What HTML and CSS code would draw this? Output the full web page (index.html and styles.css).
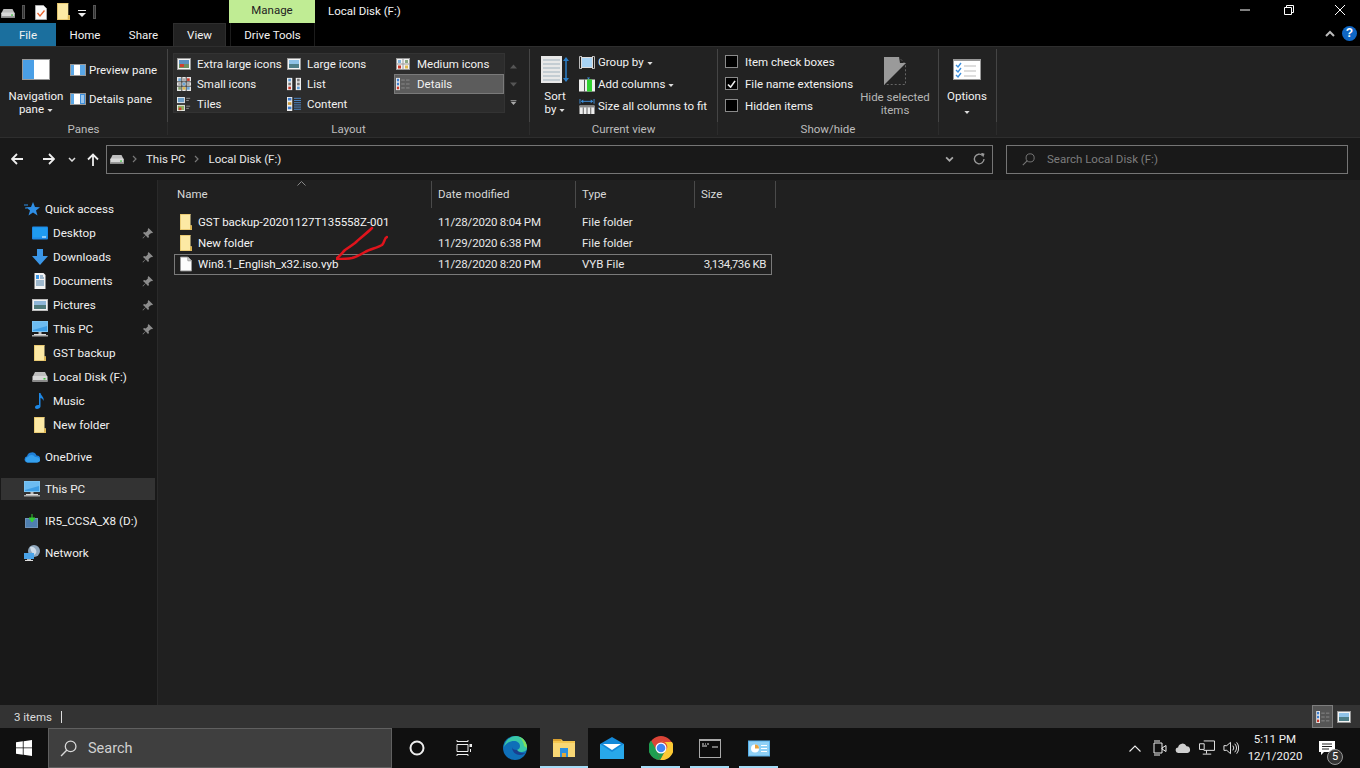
FILE: index.html
```html
<!DOCTYPE html>
<html lang="en">
<head>
<meta charset="utf-8">
<title>Local Disk (F:)</title>
<link rel="stylesheet" href="styles.css">
</head>
<body>
<svg class="defs" width="0" height="0">
  <defs>
    <symbol id="folder" viewBox="1 1 12 16"><path d="M1 1h10.500v11.500H13V17H1z" fill="#fce9a4"/><path d="M11 12.500h2V17h-2z" fill="#dcb553"/><path d="M1 1h10.500v.7H1.700V17H1z" fill="#e3c063"/><path d="M1 16.300h12v.7H1z" fill="#e3c063"/></symbol>
    <symbol id="drive" viewBox="0 0 15 10"><path d="M2.500 0h10L15 5H0z" fill="#bdbdbd"/><rect x="0" y="4" width="15" height="6" rx="1" fill="#d8d8d8"/><rect x="0" y="8" width="15" height="2" fill="#8a8a8a"/><rect x="11" y="6" width="2" height="1.500" fill="#3fc63f"/></symbol>
    <symbol id="pc" viewBox="0 0 16 16"><rect width="16" height="11" fill="#7cc4f2"/><rect x="1" y="1" width="14" height="9" fill="#3d9ee6"/><path d="M1 1h14v4L1 9z" fill="#6cbcf2"/><rect x="6.500" y="11" width="3" height="2" fill="#bbb"/><rect x="2" y="13" width="12" height="1" fill="#ddd"/><rect y="14" width="16" height="1.500" fill="#aaa"/></symbol>
    <symbol id="pin" viewBox="0 0 11 11"><path d="M6.500 0l4.500 4.500-1 .8-.8-.3L6.500 7.200 7 9 6 10 3.700 7.500 1 10.500l-.5-.5 3-2.700L1 5l1-1 1.800.5L6 2.300l-.3-.8z" fill="#8c8c8c"/></symbol>
    <symbol id="file" viewBox="0 0 13 16"><path d="M.5.500h8l4 4v11H.500z" fill="#fcfcfc" stroke="#9a9a9a"/><path d="M8.500.500v4h4z" fill="#d8d8d8" stroke="#9a9a9a"/></symbol>
    <symbol id="caret" viewBox="0 0 7 4"><path d="M0 0h7L3.500 4z" fill="#ddd"/></symbol>
    <symbol id="chev" viewBox="0 0 8 5"><path d="M1 1l3 3 3-3" fill="none" stroke="#aaa" stroke-width="1.500"/></symbol>
    <symbol id="sep" viewBox="0 0 5 8"><path d="M1 1l3 3-3 3" fill="none" stroke="#777" stroke-width="1.200"/></symbol>
    <symbol id="lens" viewBox="0 0 16 16"><circle cx="10" cy="6" r="5" fill="none" stroke="currentColor" stroke-width="1.200"/><path d="M6.500 9.500L1 15" stroke="currentColor" stroke-width="1.300"/></symbol>
    <symbol id="ic-thumb" viewBox="0 0 14 12"><rect x=".5" y=".5" width="13" height="11" fill="#f4f4f4" stroke="#999"/><rect x="2" y="2" width="10" height="8" fill="#5d8fc0"/><rect x="2" y="6" width="10" height="4" fill="#6d8f62"/><rect x="3" y="6" width="4" height="3" fill="#d0402f"/></symbol>
    <symbol id="ic-large" viewBox="0 0 14 12"><rect x=".5" y=".5" width="13" height="11" fill="#f4f4f4" stroke="#999"/><rect x="2" y="2" width="10" height="8" fill="#8fc3e8"/><rect x="2" y="6" width="10" height="4" fill="#4f7f88"/></symbol>
    <symbol id="ic-med" viewBox="0 0 14 12"><rect x=".5" y=".5" width="13" height="11" fill="#f4f4f4" stroke="#999"/><path d="M7 0v12M0 6h14" stroke="#999"/><rect x="2" y="2" width="3" height="3" fill="#7fb4de"/><rect x="9" y="2" width="3" height="3" fill="#8aa884"/><rect x="2" y="7.500" width="3" height="3" fill="#c9392b"/><rect x="9" y="7.500" width="3" height="3" fill="#e0b84c"/></symbol>
    <symbol id="ic-small" viewBox="0 0 16 16"><rect width="16" height="16" fill="#e6e6e6"/><path d="M5.500 0v16M10.500 0v16M0 5.500h16M0 10.500h16" stroke="#2b2b2b"/><rect x="1.500" y="1.500" width="3" height="3" fill="#6aa6d8"/><rect x="6.500" y="1.500" width="3" height="3" fill="#aaa"/><rect x="11.500" y="1.500" width="3" height="3" fill="#c9392b"/><rect x="1.500" y="6.500" width="3" height="3" fill="#aaa"/><rect x="6.500" y="6.500" width="3" height="3" fill="#6aa6d8"/><rect x="11.500" y="6.500" width="3" height="3" fill="#aaa"/><rect x="1.500" y="11.500" width="3" height="3" fill="#7f9f6a"/><rect x="6.500" y="11.500" width="3" height="3" fill="#e0b84c"/><rect x="11.500" y="11.500" width="3" height="3" fill="#6aa6d8"/></symbol>
    <symbol id="ic-list" viewBox="0 0 16 14"><rect width="6" height="14" fill="#eee"/><rect x="10" width="6" height="14" fill="#eee"/><rect x="1.500" y="1" width="3" height="3" fill="#5a9ad6"/><rect x="1.500" y="5.500" width="3" height="3" fill="#777"/><rect x="1.500" y="10" width="3" height="3" fill="#c9392b"/><rect x="11.500" y="1" width="3" height="3" fill="#777"/><rect x="11.500" y="5.500" width="3" height="3" fill="#777"/><rect x="11.500" y="10" width="3" height="3" fill="#5a9ad6"/></symbol>
    <symbol id="ic-details" viewBox="0 0 16 14"><rect width="4.500" height="14" fill="#eee"/><rect x="1" y="1" width="2.500" height="3" fill="#3f7fd0"/><rect x="1" y="5.500" width="2.500" height="3" fill="#3f7fd0"/><rect x="1" y="10" width="2.500" height="3" fill="#c9392b"/><path d="M6 2.500h4M11.500 2.500h4M6 7h4M11.500 7h4M6 11.500h4M11.500 11.500h4" stroke="#8f8f8f"/></symbol>
    <symbol id="ic-tiles" viewBox="0 0 16 16"><rect width="9" height="7" fill="#eee"/><rect x="1" y="1" width="7" height="5" fill="#6a9dc8"/><rect y="9" width="9" height="7" fill="#eee"/><rect x="1" y="10" width="7" height="5" fill="#8fae62"/><rect x="2" y="12" width="3" height="3" fill="#c9392b"/><path d="M10.500 1.500H15M10.500 4h3M10.500 10.500H15M10.500 13h3" stroke="#999"/></symbol>
    <symbol id="ic-content" viewBox="0 0 16 16"><rect width="6" height="16" fill="#eee"/><rect x="1" y="1" width="4" height="3" fill="#3f7fd0"/><rect x="1" y="6" width="4" height="3" fill="#cc9b3e"/><rect x="1" y="11" width="4" height="3" fill="#3f7fd0"/><path d="M8 1.500h8M8 4h8M8 6.500h8M8 9h8M8 11.500h8M8 14h8" stroke="#4f8fd6"/></symbol>
  </defs>
</svg>

<div class="title-row">
  <div class="qat">
    <svg class="q-drive"><use href="#drive"/></svg>
    <i class="q-bar"></i>
    <svg class="q-doc" viewBox="0 0 12 15"><path d="M.5.500h8l3 3v11H.500z" fill="#fafafa" stroke="#aaa"/><path d="M2.500 8l2.500 3 4.500-5.500" fill="none" stroke="#e8622c" stroke-width="1.300"/></svg>
    <svg class="q-folder"><use href="#folder"/></svg>
    <svg class="q-down" viewBox="0 0 8 7"><path d="M0 .5h8" stroke="#eee"/><path d="M0 3h8L4 7z" fill="#eee"/></svg>
    <i class="q-bar q-bar2"></i>
  </div>
  <div class="manage">Manage</div>
  <div class="title">Local Disk (F:)</div>
  <div class="win">
    <svg class="w-btn" viewBox="0 0 10 10"><path d="M0 5h10" stroke="#fff"/></svg>
    <svg class="w-btn w-restore" viewBox="0 0 10 10"><path d="M.5 2.500h7v7h-7zM2.500 2.500v-2h7v7h-2" fill="none" stroke="#fff"/></svg>
    <svg class="w-btn w-close" viewBox="0 0 10 10"><path d="M0 0l10 10M10 0L0 10" stroke="#fff"/></svg>
  </div>
</div>

<div class="tab-row">
  <div class="tab tab-file">File</div>
  <div class="tab tab-home">Home</div>
  <div class="tab tab-share">Share</div>
  <div class="tab tab-view">View</div>
  <div class="tab tab-drive">Drive Tools</div>
  <div class="tab-right">
    <svg class="collapse" viewBox="0 0 10 7"><path d="M1 6l4-4 4 4" fill="none" stroke="#bbb" stroke-width="2"/></svg>
    <div class="help">?</div>
  </div>
</div>

<div class="ribbon">
  <section class="group g-panes">
    <div class="g-body">
      <div class="big">
        <svg class="big-ic nav-ic" viewBox="0 0 28 21"><rect width="28" height="21" fill="#999"/><rect x="1" y="1" width="26" height="19" fill="#fff"/><rect x="1" y="1" width="11" height="19" fill="#4a9fe6"/></svg>
        <span>Navigation</span>
        <span>pane <svg class="caret"><use href="#caret"/></svg></span>
      </div>
      <div class="pane-col">
        <div class="pane-item"><svg class="pane-ic" viewBox="0 0 16 12"><rect width="16" height="12" fill="#999"/><rect x="1" y="1" width="14" height="10" fill="#fff"/><rect x="1" y="1" width="3" height="10" fill="#5aa7e6"/><rect x="10" y="1" width="5" height="10" fill="#5aa7e6"/></svg>Preview pane</div>
        <div class="pane-item"><svg class="pane-ic" viewBox="0 0 16 12"><rect width="16" height="12" fill="#999"/><rect x="1" y="1" width="14" height="10" fill="#fff"/><rect x="1" y="1" width="3" height="10" fill="#5aa7e6"/><path d="M10 1h5v10h-5z" fill="#3d8fdc"/><path d="M11 3h3M11 5h3M11 7h3M11 9h3" stroke="#fff"/></svg>Details pane</div>
      </div>
    </div>
    <div class="g-label">Panes</div>
  </section>

  <section class="group g-layout">
    <div class="g-body">
      <div class="gallery">
        <div class="g-item"><svg class="g-ic"><use href="#ic-thumb"/></svg>Extra large icons</div>
        <div class="g-item"><svg class="g-ic"><use href="#ic-large"/></svg>Large icons</div>
        <div class="g-item g-3"><svg class="g-ic"><use href="#ic-med"/></svg>Medium icons</div>
        <div class="g-item"><svg class="g-ic"><use href="#ic-small"/></svg>Small icons</div>
        <div class="g-item"><svg class="g-ic"><use href="#ic-list"/></svg>List</div>
        <div class="g-item g-3 g-sel"><svg class="g-ic"><use href="#ic-details"/></svg>Details</div>
        <div class="g-item"><svg class="g-ic"><use href="#ic-tiles"/></svg>Tiles</div>
        <div class="g-item"><svg class="g-ic"><use href="#ic-content"/></svg>Content</div>
      </div>
      <div class="g-scroll">
        <svg viewBox="0 0 7 4"><path d="M3.500 0L7 4H0z" fill="#555"/></svg>
        <svg viewBox="0 0 7 4"><path d="M0 0h7L3.500 4z" fill="#555"/></svg>
        <svg viewBox="0 0 7 6"><path d="M0 .5h7" stroke="#aaa"/><path d="M0 2h7L3.500 6z" fill="#aaa"/></svg>
      </div>
    </div>
    <div class="g-label">Layout</div>
  </section>

  <section class="group g-view">
    <div class="g-body">
      <div class="big big-sort">
        <svg class="big-ic sort-ic" viewBox="0 0 28 27"><rect width="21" height="27" fill="#e8e8e8"/><path d="M2 4h17M2 8h17M2 12h17M2 16h17M2 20h17M2 24h17" stroke="#b8c4cc" stroke-width="1.500"/><path d="M25 2v23" stroke="#2d7fc8" stroke-width="1.500"/><path d="M22 5l3-4 3 4zM22 22l3 4 3-4z" fill="#2d7fc8"/></svg>
        <span>Sort</span>
        <span>by <svg class="caret"><use href="#caret"/></svg></span>
      </div>
      <div class="view-col">
        <div class="v-item"><svg class="v-ic" viewBox="0 0 16 13"><path d="M3 .5H.5v12H3M13 .5h2.500v12H13" fill="none" stroke="#bbb"/><rect x="2.500" y="1.500" width="11" height="10" fill="#a8d4f5" stroke="#ddd"/></svg>Group by <svg class="caret"><use href="#caret"/></svg></div>
        <div class="v-item"><svg class="v-ic" viewBox="0 0 16 14"><rect y="2" width="16" height="12" fill="#eee"/><rect x="5" y="2" width="1" height="12" fill="#555"/><rect x="8" y="2" width="5" height="12" fill="#30d030"/><path d="M8 0h3L9.500 2z" fill="#3d8fdc"/></svg>Add columns <svg class="caret"><use href="#caret"/></svg></div>
        <div class="v-item"><svg class="v-ic" viewBox="0 0 16 16"><path d="M.5 0v5M15.500 0v5M2 2.500h12" stroke="#3d8fdc"/><path d="M4 .5v4L1.500 2.500zM12 .5v4l2.500-2z" fill="#3d8fdc"/><rect y="7" width="16" height="9" fill="#eee"/><rect y="7" width="16" height="2" fill="#888"/><path d="M4 9v7M8 9v7M12 9v7" stroke="#555"/></svg>Size all columns to fit</div>
      </div>
    </div>
    <div class="g-label">Current view</div>
  </section>

  <section class="group g-show">
    <div class="g-body">
      <div class="check-col">
        <label class="c-item"><i class="box"></i>Item check boxes</label>
        <label class="c-item"><i class="box"><svg viewBox="0 0 10 9"><path d="M1 5l3 3 5-7" fill="none" stroke="#eee" stroke-width="1.800"/></svg></i>File name extensions</label>
        <label class="c-item"><i class="box"></i>Hidden items</label>
      </div>
      <div class="big big-hide">
        <svg class="big-ic hide-ic" viewBox="0 0 22 28"><path d="M.5 27.500V.500H15l6.500 6.500v20.500z" fill="none" stroke="#666" stroke-dasharray="2 2"/><path d="M0 28V0h15l1 6h6z" fill="#9a9a9a"/></svg>
        <span>Hide selected</span>
        <span>items</span>
      </div>
    </div>
    <div class="g-label">Show/hide</div>
  </section>

  <section class="group g-opt">
    <div class="g-body">
      <div class="big big-opt">
        <svg class="big-ic nav-ic" viewBox="0 0 28 21"><rect width="28" height="21" fill="#999"/><rect x="1" y="2" width="26" height="18" fill="#fff"/><path d="M3 6l2 2 3-4M3 11l2 2 3-4M3 16l2 2 3-4" fill="none" stroke="#3d8fdc" stroke-width="1.400"/><path d="M11 7h12M11 12h12M11 17h12" stroke="#bbb"/></svg>
        <span>Options</span>
        <svg class="caret caret-solo"><use href="#caret"/></svg>
      </div>
    </div>
    <div class="g-label">&nbsp;</div>
  </section>
</div>

<div class="addr-row">
  <svg class="nav-arrow" viewBox="0 0 12 12"><path d="M12 6H1.500M6 1L1 6l5 5" fill="none" stroke="#eee" stroke-width="1.800"/></svg>
  <svg class="nav-arrow fwd" viewBox="0 0 12 12"><path d="M0 6h10.500M6 1l5 5-5 5" fill="none" stroke="#eee" stroke-width="1.800"/></svg>
  <svg class="nav-chev" viewBox="0 0 8 5"><path d="M1 1l3 3 3-3" fill="none" stroke="#ddd" stroke-width="1.500"/></svg>
  <svg class="nav-arrow up" viewBox="0 0 12 13"><path d="M6 13V2M1 6.500l5-5 5 5" fill="none" stroke="#eee" stroke-width="1.800"/></svg>
  <div class="addr">
    <svg class="a-drive"><use href="#drive"/></svg>
    <svg class="a-sep"><use href="#sep"/></svg>
    <span class="a-text">This PC</span>
    <svg class="a-sep a-sep2"><use href="#sep"/></svg>
    <span class="a-text">Local Disk (F:)</span>
    <div class="a-tools">
      <svg class="a-chev"><use href="#chev"/></svg>
      <svg class="a-refresh" viewBox="0 0 12 12"><path d="M9.500 2.500A4.800 4.800 0 1 0 11 6" fill="none" stroke="#999" stroke-width="1.300"/><path d="M7 0h4v4z" fill="#999" transform="rotate(20 9 2)"/></svg>
    </div>
  </div>
  <div class="search-box">
    <svg class="s-lens"><use href="#lens"/></svg>
    <span>Search Local Disk (F:)</span>
  </div>
</div>

<div class="main">
  <nav class="side">
    <div class="s-row top"><svg class="s-ic" viewBox="0 0 16 16"><path d="M9 1l2 5 5 .3-4 3.200 1.500 5L9 11.500 4.500 14.500 6 9.500 2 6.300l5-.3z" fill="#2f8fe6"/><path d="M0 4h4M1 7h2" stroke="#2f8fe6"/></svg>Quick access</div>
    <div class="s-row sub"><svg class="s-ic" viewBox="0 0 16 13"><rect width="16" height="13" rx="1" fill="#1e88e5"/><path d="M1 1h14v10H1z" fill="#1f9bf0"/><path d="M10 10h4v1h-4z" fill="#fff"/></svg>Desktop<svg class="pin"><use href="#pin"/></svg></div>
    <div class="s-row sub"><svg class="s-ic" viewBox="0 0 16 16"><path d="M5 0h6v7h5l-8 9-8-9h5z" fill="#3b97e8"/></svg>Downloads<svg class="pin"><use href="#pin"/></svg></div>
    <div class="s-row sub"><svg class="s-ic" viewBox="0 0 16 16"><path d="M2.500 0h9l2 2v14h-11z" fill="#f2f2f2"/><path d="M4 8h8M4 10h8M4 12h8M8 5h4M8 3h3" stroke="#4a7ea8"/><rect x="4" y="2" width="3" height="4" fill="#3b97e8"/></svg>Documents<svg class="pin"><use href="#pin"/></svg></div>
    <div class="s-row sub"><svg class="s-ic" viewBox="0 0 16 12"><rect width="16" height="12" fill="#bbb"/><rect x="1" y="1" width="14" height="10" fill="#f2f2f2"/><rect x="2" y="2" width="12" height="8" fill="#8fb6d8"/><rect x="2" y="6" width="12" height="4" fill="#4f7a7a"/></svg>Pictures<svg class="pin"><use href="#pin"/></svg></div>
    <div class="s-row sub"><svg class="s-ic"><use href="#pc"/></svg>This PC<svg class="pin"><use href="#pin"/></svg></div>
    <div class="s-row sub"><svg class="s-ic"><use href="#folder"/></svg>GST backup</div>
    <div class="s-row sub"><svg class="s-ic s-drive"><use href="#drive"/></svg>Local Disk (F:)</div>
    <div class="s-row sub"><svg class="s-ic" viewBox="0 0 16 16"><path d="M7 0h1.500c.5 3 4 4 3 8-.5-2-2-3-3-3v8.500C8.500 15 6.500 16 5 16s-2-1-2-2 1.500-2.500 4-2z" fill="#1e88e5"/></svg>Music</div>
    <div class="s-row sub last"><svg class="s-ic"><use href="#folder"/></svg>New folder</div>
    <div class="s-row top gap"><svg class="s-ic" viewBox="0 0 16 11"><path d="M3.500 11a3.200 3.200 0 0 1-.5-6.300A5 5 0 0 1 12.500 4 3.500 3.500 0 0 1 13 11z" fill="#1f80d8"/><path d="M3.500 11A2.800 2.800 0 0 1 4 5.500a4 4 0 0 1 7 0c3-.5 5 1.500 5 3 0 1.500-1.500 2.500-3 2.500z" fill="#35a0ee"/></svg>OneDrive</div>
    <div class="s-row top sel"><svg class="s-ic"><use href="#pc"/></svg>This PC</div>
    <div class="s-row top gap2"><svg class="s-ic" viewBox="0 0 16 14"><rect x="1" y="4" width="13" height="10" fill="#6f92b8"/><rect x="2" y="5" width="11" height="8" fill="#4f7fb0"/><path d="M8 0v6M5 4l3 4 3-4z" fill="#35d035" stroke="#35d035"/></svg>IR5_CCSA_X8 (D:)</div>
    <div class="s-row top gap2"><svg class="s-ic" viewBox="0 0 16 16"><circle cx="10" cy="6" r="6" fill="#8fa7bd"/><path d="M6 2c3-1 5 1 6 3s0 4-2 5L7 6z" fill="#cfdce8"/><rect y="8" width="10" height="6" fill="#4aa3e8"/><rect x="3" y="14" width="4" height="1" fill="#bbb"/><rect x="1" y="15" width="8" height="1" fill="#ddd"/></svg>Network</div>
  </nav>

  <section class="files">
    <div class="sort-mark"><svg viewBox="0 0 9 5"><path d="M.5 4.500l4-4 4 4" fill="none" stroke="#888"/></svg></div>
    <div class="grid head">
      <div>Name</div><div>Date modified</div><div>Type</div><div>Size</div>
    </div>
    <div class="list">
      <div class="grid row"><div class="f-name"><svg class="f-ic"><use href="#folder"/></svg>GST backup-20201127T135558Z-001</div><div class="f-date">11/28/2020 8:04 PM</div><div>File folder</div><div></div></div>
      <div class="grid row"><div class="f-name"><svg class="f-ic"><use href="#folder"/></svg>New folder</div><div class="f-date">11/29/2020 6:38 PM</div><div>File folder</div><div></div></div>
      <div class="grid row selected"><div class="f-name"><svg class="f-ic"><use href="#file"/></svg>Win8.1_English_x32.iso.vyb</div><div class="f-date">11/28/2020 8:20 PM</div><div>VYB File</div><div class="f-size">3,134,736 KB</div></div>
    </div>
    <svg class="scribble" viewBox="0 0 52 36"><path d="M36 4C30 10 24 14 19 19 15 22 12 24 9 26 6 29 4 32 1 34" fill="none" stroke="#e0141c" stroke-width="2.500" stroke-linecap="round" stroke-linejoin="round"/><path d="M51 13C48 14 49 18 46 21 41 24 34 25 29 28 24 31 20 33 16 34 11 35 6 35 1 35" fill="none" stroke="#e0141c" stroke-width="2.500" stroke-linecap="round" stroke-linejoin="round"/></svg>
  </section>
</div>

<div class="status">
  <span class="s-count">3 items</span>
  <i class="s-bar"></i>
  <div class="s-views">
    <div class="s-view on"><svg viewBox="0 0 16 14"><use href="#ic-details"/></svg></div>
    <div class="s-view s-view2"><svg viewBox="0 0 14 12"><use href="#ic-large"/></svg></div>
  </div>
</div>

<footer class="taskbar">
  <div class="start"><svg viewBox="0 0 16 16"><path d="M0 2.300L6.800 1.300v6.200H0zM7.600 1.200L16 0v7.500H7.600zM0 8.300h6.800v6.400L0 13.700zM7.600 8.300H16V16l-8.400-1.200z" fill="#fff"/></svg></div>
  <div class="t-search"><svg class="t-lens"><use href="#lens"/></svg><span>Search</span></div>
  <div class="t-app"><svg class="t-cortana" viewBox="0 0 16 16"><circle cx="8" cy="8" r="6.500" fill="none" stroke="#eee" stroke-width="2"/></svg></div>
  <div class="t-app"><svg class="t-ic" viewBox="0 0 18 16"><path d="M3 4.500h11v7H3zM3 1.500h11M3 14.500h11M3 0v1.500M14 0v1.500M3 14.500V16M14 14.500V16" fill="none" stroke="#eee"/><rect x="15.500" y="4" width="2.500" height="3" fill="#eee"/><rect x="16" y="9" width="1" height="3" fill="#eee"/></svg></div>
  <div class="t-app"><svg class="t-big" viewBox="0 0 24 24"><circle cx="12" cy="12" r="12" fill="#0f6fb8"/><path d="M1 11C2 4 8 0 13 0c6 0 11 5 11 12 0 3-3 4-6 4-2 0-4-1-4-2 2-1 3-2 3-4 0-3-3-5-6-5-4 0-8 2-10 6z" fill="#38c8a8"/><path d="M24 12c0-6-4-10-8-11 3 2 5 6 5 9l3 2z" fill="#7fe05a"/><path d="M14 14c-3 0-5-1-5-3 0 5 4 8 8 8 2 0 4-1 5-2-2 .5-6 0-8-3z" fill="#1a3f8f"/></svg></div>
  <div class="t-app t-active"><svg class="t-big t-exp" viewBox="0 0 22 18"><path d="M0 0h8l2 2h12v16H0z" fill="#f3c64f"/><rect y="0" width="8" height="2" fill="#d9a030"/><rect y="4" width="22" height="14" fill="#f8d775"/><path d="M7 9h8v9h-2v-4H9v4H7z" fill="#2b8fe0"/><rect x="9" y="14" width="4" height="4" fill="#e0a93c"/></svg></div>
  <div class="t-app t-plain"><svg class="t-big t-mail" viewBox="0 0 24 22"><path d="M0 7L12 0l12 7v15H0z" fill="#1489d8"/><path d="M0 7l12 8 12-8v15H0z" fill="#28a8ea"/><path d="M3 7h18l-9 6z" fill="#fff"/></svg></div>
  <div class="t-app t-run"><svg class="t-big" viewBox="0 0 24 24"><circle cx="12" cy="12" r="12" fill="#db4437"/><path d="M12 6h11a12 12 0 0 1-12 18l5-9a5 5 0 0 0-4-9z" fill="#fcc934"/><path d="M2 4.500l6 10.500 3 9A12 12 0 0 1 2 4.500z" fill="#1e9e50"/><path d="M8 15l3 9 5-9z" fill="#1e9e50"/><circle cx="12" cy="12" r="5.500" fill="#fff"/><circle cx="12" cy="12" r="4.300" fill="#4285f4"/></svg></div>
  <div class="t-app t-run"><svg class="t-big t-cmd" viewBox="0 0 22 19"><rect width="22" height="19" fill="#aaa"/><rect x="1" y="2" width="20" height="16" fill="#0c0c0c"/><path d="M3 5h2M6 5h1M8 5h2M3 7h5M13 8h6" stroke="#ddd"/></svg></div>
  <div class="t-app t-run"><svg class="t-big t-cmd" viewBox="0 0 22 16"><rect width="22" height="16" fill="#56b0ea"/><rect x="1" y="1" width="20" height="14" fill="#8fd0f5"/><circle cx="7" cy="8" r="4" fill="#fff"/><path d="M7 8V4a4 4 0 0 1 4 4z" fill="#e8a33c"/><path d="M13 5h6M13 8h6M13 11h6" stroke="#fff"/></svg></div>
  <div class="tray">
    <svg class="tr-chev" viewBox="0 0 12 7"><path d="M.5 6.500L6 1l5.500 5.500" fill="none" stroke="#eee" stroke-width="1.100"/></svg>
    <svg class="tr-ic" viewBox="0 0 16 16"><path d="M3 3h8v10H3z" fill="none" stroke="#eee"/><path d="M3 1h6M3 15h6" stroke="#eee"/><path d="M11 8l4-2.500v6L11 9z" fill="none" stroke="#eee"/></svg>
    <svg class="tr-ic" viewBox="0 0 18 12"><path d="M4 11.500a3 3 0 0 1-.5-6A5 5 0 0 1 13 4a3.800 3.800 0 0 1 1 7.500z" fill="#cfcfcf"/></svg>
    <svg class="tr-ic" viewBox="0 0 17 16"><path d="M5 .5h11.500v10H5M.5 3.500h5v6h-5zM8 10.500V14M4 14.500h9" fill="none" stroke="#eee"/></svg>
    <svg class="tr-ic" viewBox="0 0 17 16"><path d="M1 5.500h3L8 2v12L4 10.500H1z" fill="none" stroke="#eee"/><path d="M10.500 5.500a4 4 0 0 1 0 5M12.500 3.500a7 7 0 0 1 0 9M14.500 2a9.500 9.500 0 0 1 0 12" fill="none" stroke="#eee"/></svg>
    <div class="clock"><div>5:11 PM</div><div>12/1/2020</div></div>
    <div class="notif">
      <svg viewBox="0 0 16 14"><path d="M0 0h16v11H5l-3 3v-3H0z" fill="#fff"/><path d="M3 3h10M3 5.500h10M3 8h7" stroke="#222"/></svg>
      <span class="badge">5</span>
    </div>
  </div>
</footer>
</body>
</html>
```

FILE: styles.css
```css
* { box-sizing: border-box; }
html, body { margin: 0; height: 100%; }
body {
  width: 1360px; height: 768px; overflow: hidden;
  display: flex; flex-direction: column;
  background: #202020; color: #f2f2f2;
  font: 11.5px/16px Roboto, "Liberation Sans", sans-serif;
}
svg { display: block; flex: none; }
i { font-style: normal; }
.defs { position: absolute; }

/* title row */
.title-row { height: 23px; flex: none; display: flex; background: #000; }
.qat { width: 229px; flex: none; display: flex; align-items: center; }
.q-drive { width: 14px; height: 9px; margin: 4px 0 0 1px; }
.q-bar { width: 3px; height: 14px; margin-left: 7px; background: #333; border: 1px solid #555; }
.q-doc { width: 12px; height: 15px; margin: 1px 0 0 10px; }
.q-folder { width: 13px; height: 17px; margin: 0 0 0 10px; }
.q-down { width: 8px; height: 7px; margin: 4px 0 0 8px; }
.q-bar2 { margin-left: 7px; }
.manage { width: 86px; flex: none; background: #c0ec94; color: #222; text-align: center; line-height: 20px; }
.title { margin-left: 13px; line-height: 23px; color: #f4f4f4; }
.win { margin-left: auto; display: flex; padding-right: 15px; }
.w-btn { width: 10px; height: 10px; margin-top: 5px; }
.w-restore { margin-left: 34px; }
.w-close { margin-left: 41px; }

/* tabs */
.tab-row { height: 23px; flex: none; display: flex; background: #000; }
.tab { line-height: 24px; text-align: center; flex: none; }
.tab-file { width: 56px; background: #1b6f9e; }
.tab-home { width: 58px; }
.tab-share { width: 59px; }
.tab-view { width: 53px; background: #222; border: 1px solid #2e2e2e; border-bottom: 0; line-height: 23px; }
.tab-drive { width: 85px; margin-left: 4px; border-left: 1px solid #1c1c1c; border-right: 1px solid #1c1c1c; }
.tab-right { margin-left: auto; display: flex; align-items: center; padding: 0 3px 2px 0; }
.collapse { width: 10px; height: 7px; margin-right: 7px; }
.help { width: 15px; height: 15px; border-radius: 50%; background: #0f66c4; color: #fff; font: bold 12px/15px "Liberation Sans", sans-serif; text-align: center; }

/* ribbon */
.ribbon { height: 92px; flex: none; display: flex; background: #222; border-top: 1px solid #2e2e2e; border-bottom: 1px solid #2e2e2e; }
.group { flex: none; display: flex; flex-direction: column; border-right: 1px solid #3c3c3c; border-image: linear-gradient(#454545 84%, #2c2c2c 84%) 1; margin-top: 2px; height: 86px; }
.g-body { height: 73px; flex: none; display: flex; }
.g-label { flex: 1; text-align: center; color: #bdbdbd; line-height: 15px; padding-top: 0; }
.g-panes { width: 168px; }
.g-layout { width: 362px; }
.g-view { width: 188px; }
.g-show { width: 221px; }
.g-opt { width: 58px; }
.big { display: flex; flex-direction: column; align-items: center; line-height: 13px; color: #f2f2f2; }
.big span { display: flex; align-items: center; gap: 3px; white-space: nowrap; }
.big-ic { margin-bottom: 10px; }
.nav-ic { width: 28px; height: 21px; }
.g-panes .big { width: 64px; margin-left: 4px; padding-top: 10px; }
.caret { width: 6px; height: 3px; margin-top: 2px; }
.caret-solo { margin-top: 8px; }
.pane-col { display: flex; flex-direction: column; gap: 13px; padding-top: 13px; margin-left: 2px; }
.pane-item { display: flex; align-items: center; gap: 3px; white-space: nowrap; height: 16px; }
.pane-ic { width: 16px; height: 12px; }

.gallery { width: 332px; height: 60px; margin: 4px 0 0 5px; background: #2c2c2c; border: 1px solid #333; display: grid; grid-template-columns: 113px 107px 1fr; grid-auto-rows: 20px; }
.g-item { display: flex; align-items: center; gap: 6px; white-space: nowrap; }
.g-item:nth-child(3n+1) { padding-left: 3px; }
.g-ic { width: 14px; height: 14px; }
.g-item.g-3 { padding-left: 2px; gap: 7px; }
.g-item.g-sel { padding-left: 1px; background: #5c5c5c; border: 1px solid #7a7a7a; }
.g-scroll { width: 15px; height: 60px; margin: 4px 0 0 1px; display: flex; flex-direction: column; align-items: center; justify-content: space-around; padding: 4px 0 2px; }
.g-scroll svg { width: 7px; height: 5px; }

.big-sort { width: 44px; margin-left: 3px; padding-top: 7px; }
.big-sort .big-ic { margin-bottom: 7px; }
.sort-ic { width: 28px; height: 27px; }
.view-col { display: flex; flex-direction: column; padding-top: 4px; margin-left: 2px; gap: 4px; }
.v-item { display: flex; align-items: center; gap: 3px; height: 18px; white-space: nowrap; }
.v-ic { width: 16px; height: 15px; }

.check-col { display: flex; flex-direction: column; gap: 9px; padding: 6px 0 0 7px; width: 140px; }
.c-item { display: flex; align-items: center; gap: 7px; height: 13px; white-space: nowrap; }
.box { width: 13px; height: 13px; background: #000; border: 1px solid #8a8a8a; display: flex; align-items: center; justify-content: center; }
.box svg { width: 9px; height: 8px; }
.big-hide { width: 74px; padding-top: 8px; color: #b5b5b5; }
.hide-ic { width: 22px; height: 28px; margin-bottom: 6px; }
.big-opt { width: 56px; padding-top: 10px; }

/* address */
.addr-row { height: 42px; flex: none; display: flex; align-items: center; background: #191919; }
.nav-arrow { width: 12px; height: 12px; margin-left: 11px; }
.fwd { margin-left: 20px; }
.nav-chev { width: 8px; height: 5px; margin-left: 13px; }
.up { height: 13px; margin-left: 11px; }
.addr { width: 887px; height: 29px; margin-left: 7px; border: 1px solid #757575; display: flex; align-items: center; padding-left: 3px; }
.a-drive { width: 14px; height: 9px; }
.a-sep { width: 5px; height: 8px; margin: 0 9px 0 8px; }
.a-sep2 { margin: 0 10px 0 8px; }
.a-text { color: #e8e8e8; }
.a-tools { margin-left: auto; display: flex; align-items: center; height: 100%; }
.a-chev { width: 9px; height: 6px; margin-right: 9px; }
.a-refresh { width: 12px; height: 12px; margin: 0 7px 0 10px; }
.search-box { width: 342px; height: 29px; margin-left: 13px; border: 1px solid #757575; display: flex; align-items: center; padding-left: 15px; gap: 12px; color: #7d7d7d; }
.s-lens { width: 13px; height: 13px; color: #777; }

/* main */
.main { flex: 1; display: flex; min-height: 0; }
.side { width: 158px; flex: none; background: #191919; border-right: 1px solid #2a2a2a; padding-top: 17px; font-size: 11.700px; }
.s-row { height: 24px; display: flex; align-items: center; gap: 5px; white-space: nowrap; color: #f0f0f0; }
.top { padding-left: 24px; }
.sub { padding-left: 32px; }
.s-ic { width: 16px; height: 16px; }
.s-drive { height: 10px; }
.pin { width: 11px; height: 11px; margin-left: auto; margin-right: 4px; }
.gap { margin-top: 8px; }
.gap2 { margin-top: 8px; }
.sel { margin: 9px 2px 1px 1px; height: 22px; padding-left: 23px; background: #333; }
.sel + .gap2 { margin-top: 9px; }

.files { flex: 1; background: #202020; padding-left: 16px; position: relative; }
.sort-mark { position: absolute; left: 139px; top: 1px; }
.sort-mark svg { width: 9px; height: 5px; }
.grid { display: grid; grid-template-columns: 257px 144px 119px 78px; width: 598px; }
.head { height: 25px; margin-top: 1px; width: 602px; grid-template-columns: 258px 144px 119px 81px; color: #d8d8d8; }
.head > div { border-right: 1px solid #4a4a4a; padding-left: 6px; line-height: 27px; }
.head > div:first-child { padding-left: 3px; }
.list { padding-top: 6px; }
.row { height: 21px; align-items: center; color: #e8e8e8; }
.row > div { padding: 0 0 1px 7px; white-space: nowrap; }
.row > .f-name { display: flex; align-items: center; padding-left: 6px; gap: 6px; color: #f4f4f4; }
.f-ic { width: 12px; height: 16px; }
.row > .f-date { letter-spacing: -.2px; }
.row > .f-size { padding: 0 6px 1px 0; text-align: right; letter-spacing: -.4px; }
.selected { outline: 1px solid #7a7a7a; outline-offset: -1px; }
.scribble { position: absolute; left: 178px; top: 44px; width: 52px; height: 36px; }

/* status */
.status { height: 23px; flex: none; display: flex; align-items: center; background: #333; padding-left: 14px; color: #dcdcdc; }
.s-bar { width: 1px; height: 12px; background: #ddd; margin-left: 9px; }
.s-views { margin-left: auto; display: flex; height: 100%; padding-right: 8px; gap: 3px; }
.s-view { width: 21px; display: flex; align-items: center; justify-content: center; }
.s-view2 { width: 16px; }
.s-view svg { width: 14px; height: 12px; }
.s-view.on { background: #555; border: 1px solid #7d7d7d; }

/* taskbar */
.taskbar { height: 40px; flex: none; display: flex; background: #101010; }
.start { width: 48px; flex: none; display: flex; align-items: center; justify-content: center; }
.start svg { width: 16px; height: 16px; }
.t-search { width: 344px; flex: none; background: #3f3f3f; border: 1px solid #606060; display: flex; align-items: center; padding-left: 11px; gap: 11px; font-size: 14.500px; color: #d0d0d0; }
.t-search span { padding-top: 2px; }
.t-lens { width: 17px; height: 17px; color: #d8d8d8; }
.t-app { width: 49px; flex: none; display: flex; align-items: center; justify-content: center; position: relative; }
.t-cortana { width: 16px; height: 16px; }
.t-ic { width: 18px; height: 16px; margin-right: 5px; }
.t-big { width: 24px; height: 24px; }
.t-exp { width: 22px; height: 18px; }
.t-mail { height: 22px; }
.t-cmd { width: 22px; height: 19px; }
.t-active { background: #333; box-shadow: inset 0 -2px 0 #a6dcf7; width: 48px; margin-left: 1px; }
.t-plain { width: 48px; }
.t-run::after { content: ""; position: absolute; left: 5px; right: 5px; bottom: 0; height: 2px; background: #a6dcf7; }
.tray { margin-left: auto; display: flex; align-items: center; padding-right: 25px; }
.tr-chev { width: 12px; height: 7px; margin-right: 2px; }
.tr-ic { width: 16px; height: 16px; margin-left: 8px; }
.clock { width: 78px; margin-left: -3px; text-align: center; line-height: 17px; }
.notif { position: relative; width: 16px; margin-left: 5px; }
.notif svg { width: 16px; height: 14px; }
.badge { position: absolute; left: 8px; top: 8px; width: 16px; height: 16px; border-radius: 50%; background: #333; border: 1px solid #999; font-size: 11px; line-height: 14px; text-align: center; color: #fff; }
```
